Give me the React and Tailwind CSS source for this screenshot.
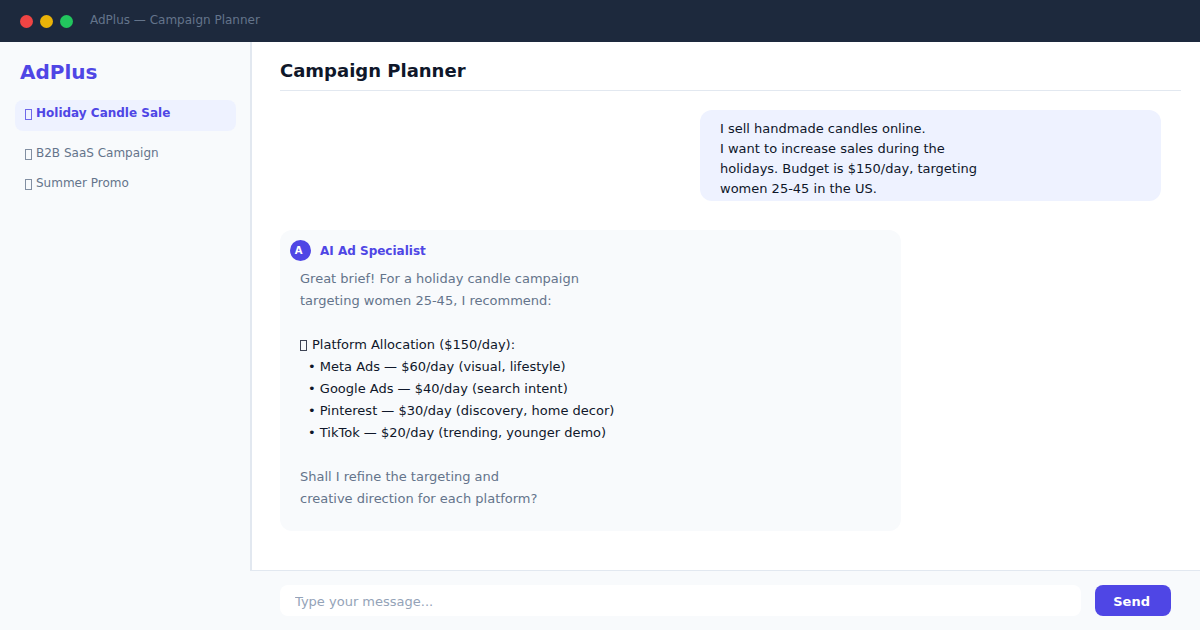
import { useState } from "react";

const campaigns = ["Holiday Candle Sale", "B2B SaaS Campaign", "Summer Promo"];

const platforms = [
  "Meta Ads — $60/day (visual, lifestyle)",
  "Google Ads — $40/day (search intent)",
  "Pinterest — $30/day (discovery, home decor)",
  "TikTok — $20/day (trending, younger demo)",
];

// small empty box in front of a label
function BoxMark() {
  return <span className="mt-1 mr-1 h-[11px] w-[7px] shrink-0 border border-current opacity-80" />;
}

function TitleBar() {
  return (
    <header className="flex h-[42px] shrink-0 items-center bg-slate-800 px-5">
      <div className="flex gap-[7px]">
        <span className="size-[13px] rounded-full bg-[#ef4444]" />
        <span className="size-[13px] rounded-full bg-[#eab308]" />
        <span className="size-[13px] rounded-full bg-[#22c55e]" />
      </div>
      <p className="ml-[17px] pb-0.5 text-xs text-[#64748b]">AdPlus — Campaign Planner</p>
    </header>
  );
}

function Sidebar({ active, onSelect }) {
  return (
    <aside className="w-[250px] shrink-0 bg-[#f8fafc] px-[15px] pt-4">
      <p className="px-[5px] text-xl leading-7 font-bold text-[#4f46e5]">AdPlus</p>
      <nav className="mt-[14px] -mr-px flex flex-col">
        {campaigns.map((name, index) => (
          <button
            key={name}
            type="button"
            onClick={() => onSelect(index)}
            className={
              index === active
                ? "mb-[9px] flex rounded-lg bg-[#eef2ff] px-[10px] pt-[5px] pb-[10px] text-left text-xs leading-4 font-bold text-[#4f46e5]"
                : "flex px-[10px] pt-[5px] pb-[9px] text-left text-xs leading-4 text-[#64748b]"
            }
          >
            <BoxMark />
            {name}
          </button>
        ))}
      </nav>
    </aside>
  );
}

function UserMessage() {
  return (
    <div className="mr-5 w-full max-w-[461px] self-end rounded-xl bg-[#eef2ff] px-5 pt-[9px] pb-0.5 text-[13px] leading-5 text-[#0f172a]">
      I sell handmade candles online.
      <br />
      I want to increase sales during the
      <br />
      holidays. Budget is $150/day, targeting
      <br />
      women 25-45 in the US.
    </div>
  );
}

function AssistantMessage() {
  return (
    <div className="mt-[29px] w-full max-w-[621px] rounded-xl bg-[#f8fafc] px-[10px] pt-[10px] pb-[21px] text-[13px] leading-[22px]">
      <div className="flex items-center gap-[9px]">
        <span className="flex size-[21px] items-center justify-center rounded-full bg-[#4f46e5] pr-1 text-[10px] font-bold text-white">
          A
        </span>
        <p className="text-xs leading-5 font-bold text-[#4f46e5]">AI Ad Specialist</p>
      </div>
      <div className="mt-[7px] flex flex-col gap-[22px] px-[10px] text-[#64748b]">
        <p>
          Great brief! For a holiday candle campaign
          <br />
          targeting women 25-45, I recommend:
        </p>
        <div className="text-[#0f172a]">
          <p className="flex gap-px">
            <span className="flex pt-0.5">
              <BoxMark />
            </span>
            Platform Allocation ($150/day):
          </p>
          <ul>
            {platforms.map((line) => (
              <li key={line} className="pl-2">
                • {line}
              </li>
            ))}
          </ul>
        </div>
        <p>
          Shall I refine the targeting and
          <br />
          creative direction for each platform?
        </p>
      </div>
    </div>
  );
}

export default function App() {
  const [active, setActive] = useState(0);
  const [message, setMessage] = useState("");

  const handleSubmit = (e) => {
    e.preventDefault();
    setMessage("");
  };

  return (
    <div className="flex min-h-screen flex-col bg-white font-['DejaVu_Sans',sans-serif]">
      <TitleBar />
      <div className="flex flex-1">
        <Sidebar active={active} onSelect={setActive} />
        <main className="flex min-w-0 flex-1 flex-col">
          <section className="flex flex-1 flex-col border-l-2 border-[#e2e8f0] pr-[19px] pb-5 pl-7">
            <h1 className="border-b border-[#e2e8f0] pt-[17px] pb-[7px] text-lg leading-6 font-bold text-[#0f172a]">
              Campaign Planner
            </h1>
            <div className="flex flex-col pt-[19px]">
              <UserMessage />
              <AssistantMessage />
            </div>
          </section>
          <form
            onSubmit={handleSubmit}
            className="flex gap-[14px] border-t border-[#e2e8f0] bg-[#f8fafc] pt-[14px] pr-[29px] pb-[14px] pl-[30px]"
          >
            <input
              type="text"
              aria-label="Message"
              value={message}
              onChange={(e) => setMessage(e.target.value)}
              placeholder="Type your message..."
              className="h-[31px] min-w-0 flex-1 rounded-lg bg-white px-[15px] pt-0.5 text-[13px] text-[#0f172a] outline-none placeholder:text-[#94a3b8]"
            />
            <button
              type="submit"
              className="h-[31px] rounded-lg bg-[#4f46e5] pt-0.5 pr-[21px] pl-[18px] text-[13px] font-bold text-white"
            >
              Send
            </button>
          </form>
        </main>
      </div>
    </div>
  );
}
